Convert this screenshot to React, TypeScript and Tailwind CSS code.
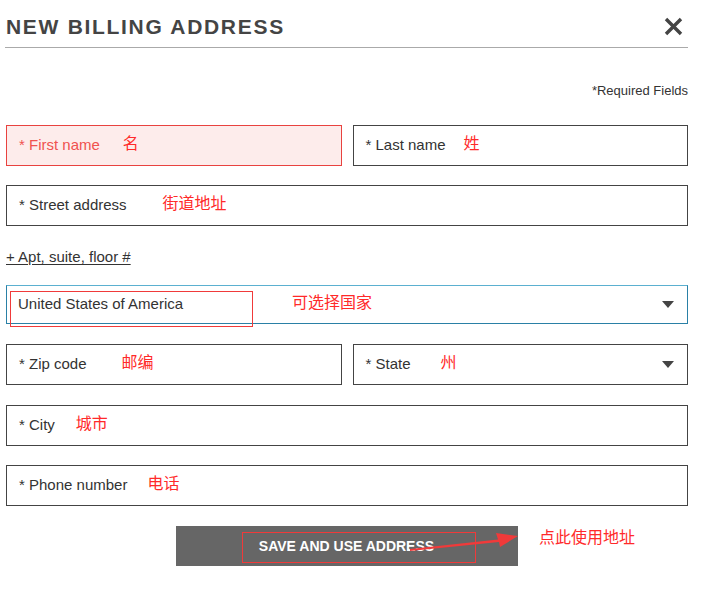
import React from "react";

const font = { fontFamily: '"Liberation Sans", Arial, sans-serif' };
const cjk = '"Liberation Sans", "Noto Sans CJK SC", sans-serif';

function Note({ children, className = "" }: { children: React.ReactNode; className?: string }) {
  return (
    <span
      className={`text-[16px] text-[#ff2a2a] leading-none -mt-[3px] ${className}`}
      style={{ fontFamily: cjk }}
    >
      {children}
    </span>
  );
}

function Caret() {
  return (
    <svg width="12" height="7" viewBox="0 0 12 7" className="ml-auto mr-[13px]">
      <path d="M0 0h12L6 7z" fill="#444" />
    </svg>
  );
}

function Field({
  label,
  note,
  noteClass,
  error,
  select,
}: {
  label: string;
  note?: string;
  noteClass?: string;
  error?: boolean;
  select?: boolean;
}) {
  return (
    <div
      className={`flex h-[41px] items-center border pl-[12px] ${
        error ? "border-[#e8423f] bg-[#fdeceb] text-[#f0524f]" : "border-[#444] bg-white text-[#333]"
      }`}
    >
      <span className="text-[15px]">{label}</span>
      {note && <Note className={noteClass}>{note}</Note>}
      {select && <Caret />}
    </div>
  );
}

export default function App() {
  return (
    <div className="min-h-[590px] w-[707px] bg-white pl-[6px] pr-[19px]" style={font}>
      {/* Header */}
      <div className="relative -ml-[1px] flex h-[48px] items-center border-b border-[#aaa] pl-[1px] pt-[6px]">
        <h1 className="text-[21px] font-bold tracking-[1.7px] text-[#444]">NEW BILLING ADDRESS</h1>
        <svg width="19" height="19" viewBox="0 0 19 19" className="ml-auto mr-[5px]">
          <path d="M2 2L17 17M17 2L2 17" stroke="#444" strokeWidth="3.4" />
        </svg>
      </div>

      <div className="mt-[33px] text-right text-[13px] text-[#333]">*Required Fields</div>

      <div className="mt-[24px] grid grid-cols-2 gap-[11px]">
        <Field label="* First name" note="名" noteClass="ml-[23px]" error />
        <Field label="* Last name" note="姓" noteClass="ml-[18px]" />
      </div>

      <div className="mt-[19px]">
        <Field label="* Street address" note="街道地址" noteClass="ml-[36px]" />
      </div>

      <div className="mt-[20px] text-[15px] text-[#333] underline underline-offset-2">+ Apt, suite, floor #</div>

      {/* Country */}
      <div className="relative mt-[17px] flex h-[39px] items-center border border-[#2a80a6] border-t-[#5bb0d0] pl-[11px] text-[#333]">
        <span className="text-[15px]">United States of America</span>
        <Note className="ml-[109px]">可选择国家</Note>
        <Caret />
        <div className="pointer-events-none absolute left-[3px] top-[5px] h-[36px] w-[243px] border border-[#f03a3a]" />
      </div>

      <div className="mt-[20px] grid grid-cols-2 gap-[11px]">
        <Field label="* Zip code" note="邮编" noteClass="ml-[35px]" />
        <Field label="* State" note="州" noteClass="ml-[30px]" select />
      </div>

      <div className="mt-[20px]">
        <Field label="* City" note="城市" noteClass="ml-[21px]" />
      </div>

      <div className="mt-[19px]">
        <Field label="* Phone number" note="电话" noteClass="ml-[20px]" />
      </div>

      {/* Save */}
      <div className="relative mt-[20px] flex justify-center">
        <div className="relative -ml-[1px] flex h-[40px] w-[342px] cursor-pointer items-center justify-center bg-[#666] text-[14px] font-bold text-white">
          SAVE AND USE ADDRESS
          <div className="pointer-events-none absolute left-[66px] top-[6px] h-[31px] w-[234px] border border-[#f03a3a]" />
          <svg
            width="110"
            height="30"
            viewBox="0 0 110 30"
            className="pointer-events-none absolute left-[232px] top-[4px] overflow-visible"
          >
            <path d="M2 19L90 9.5L88 3L110 6L92 17L91 12L2 21z" fill="#f03a3a" />
          </svg>
        </div>
        <span
          className="absolute left-[533px] top-[0px] text-[16px] text-[#ff2a2a]"
          style={{ fontFamily: cjk }}
        >
          点此使用地址
        </span>
      </div>
    </div>
  );
}
